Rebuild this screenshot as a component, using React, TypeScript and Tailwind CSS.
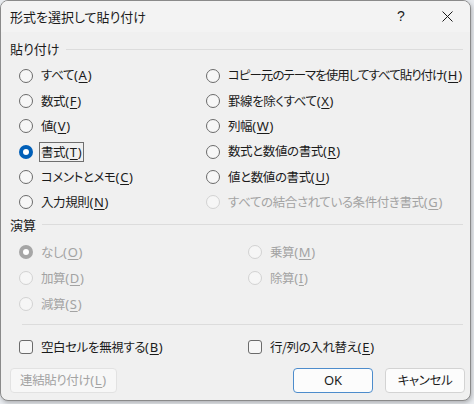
import React from "react"

const font = "[font-family:'Noto_Sans_CJK_JP','Noto_Sans',sans-serif] [font-feature-settings:'palt']"

const Label = ({ text, k, tight = false }: { text: string; k?: string; tight?: boolean }) => (
    <span className="whitespace-nowrap">
        <span className={`text-[12.5px] ${tight ? "tracking-[-1px]" : "tracking-[-0.4px]"}`}>{text}</span>
        {k && (
            <span className="[font-family:'Noto_Sans',sans-serif] text-[13px] tracking-[0.7px]">
                (<span className="underline underline-offset-[2px] decoration-1">{k}</span>)
            </span>
        )}
    </span>
)

const Radio = ({
    text,
    k,
    checked = false,
    disabled = false,
    focused = false,
    tight = false,
}: {
    text: string
    k: string
    checked?: boolean
    disabled?: boolean
    focused?: boolean
    tight?: boolean
}) => {
    let circle = "border border-[#6b6b6b] bg-[#f7f7f7]"
    if (disabled && checked) circle = "bg-[#a6a6a6]"
    else if (disabled) circle = "border border-[#d2d2d2] bg-[#f6f6f6]"
    else if (checked) circle = "bg-[#005fb8]"
    return (
        <div className={`flex items-center gap-[8px] ${disabled ? "text-[#a3a3a3]" : "text-[#1b1b1b]"}`}>
            <span className={`w-[14px] h-[14px] rounded-full flex items-center justify-center shrink-0 ${circle}`}>
                {checked && <span className="w-[6px] h-[6px] rounded-full bg-white" />}
            </span>
            <span className={focused ? "border border-[#6f6f6f] px-[1px] -ml-[2px] leading-[17px]" : ""}>
                <Label text={text} k={k} tight={tight} />
            </span>
        </div>
    )
}

const Checkbox = ({ text, k }: { text: string; k: string }) => (
    <div className="flex items-center gap-[8px] text-[#1b1b1b]">
        <span className="w-[14px] h-[14px] rounded-[3px] border border-[#6b6b6b] bg-[#f7f7f7] shrink-0" />
        <Label text={text} k={k} />
    </div>
)

const GroupLabel = ({ text }: { text: string }) => (
    <div className="flex items-center gap-[6px] pl-[9px] pr-[7px]">
        <span className="text-[#1b1b1b]">{text}</span>
        <span className="flex-1 h-px bg-[#dcdcdc]" />
    </div>
)

const pasteLeft = [
    { text: "すべて", k: "A" },
    { text: "数式", k: "F" },
    { text: "値", k: "V" },
    { text: "書式", k: "T", checked: true, focused: true },
    { text: "コメントとメモ", k: "C" },
    { text: "入力規則", k: "N" },
]

const pasteRight = [
    { text: "コピー元のテーマを使用してすべて貼り付け", k: "H", tight: true },
    { text: "罫線を除くすべて", k: "X" },
    { text: "列幅", k: "W" },
    { text: "数式と数値の書式", k: "R" },
    { text: "値と数値の書式", k: "U" },
    { text: "すべての結合されている条件付き書式", k: "G", disabled: true },
]

export default function App() {
    return (
        <div className={`w-[474px] h-[404px] bg-[#e9ecf0] text-[13px] ${font}`}>
            <div className="w-[471px] h-[401px] rounded-[8px] border border-[#8a8a8a] bg-[#f0f0f0] overflow-hidden shadow-[1px_2px_4px_rgba(0,0,0,0.25)] flex flex-col">
                {/* title bar */}
                <div className="h-[31px] bg-[#f3f3f3] flex items-center pl-[9px] text-[#1b1b1b]">
                    <span className="flex-1">形式を選択して貼り付け</span>
                    <span className="w-[46px] text-center text-[14px] [font-family:'Liberation_Sans',sans-serif]">?</span>
                    <span className="w-[46px] flex justify-center">
                        <svg width="11" height="11" viewBox="0 0 11 11">
                            <path d="M0.5 0.5L10.5 10.5M10.5 0.5L0.5 10.5" stroke="#1b1b1b" strokeWidth="1" />
                        </svg>
                    </span>
                </div>

                <div className="flex flex-col pt-[5px]">
                    <div className="h-[24px] flex flex-col justify-center">
                        <GroupLabel text="貼り付け" />
                    </div>
                    <div className="grid grid-cols-[205px_1fr] mt-[2px]">
                        <div className="flex flex-col pl-[18px]">
                            {pasteLeft.map((r) => (
                                <div key={r.k} className="h-[25.3px] flex items-center">
                                    <Radio {...r} />
                                </div>
                            ))}
                        </div>
                        <div className="flex flex-col">
                            {pasteRight.map((r) => (
                                <div key={r.k} className="h-[25.3px] flex items-center">
                                    <Radio {...r} />
                                </div>
                            ))}
                        </div>
                    </div>

                    <div className="h-[20px] flex flex-col justify-center">
                        <GroupLabel text="演算" />
                    </div>
                    <div className="grid grid-cols-[247px_1fr] mt-[4px]">
                        <div className="flex flex-col pl-[18px]">
                            <div className="h-[26px] flex items-center">
                                <Radio text="なし" k="O" checked disabled />
                            </div>
                            <div className="h-[26px] flex items-center">
                                <Radio text="加算" k="D" disabled />
                            </div>
                            <div className="h-[26px] flex items-center">
                                <Radio text="減算" k="S" disabled />
                            </div>
                        </div>
                        <div className="flex flex-col">
                            <div className="h-[26px] flex items-center">
                                <Radio text="乗算" k="M" disabled />
                            </div>
                            <div className="h-[26px] flex items-center">
                                <Radio text="除算" k="I" disabled />
                            </div>
                        </div>
                    </div>

                    <div className="h-px bg-[#dcdcdc] ml-[21px] mr-[7px] mt-[7px]" />

                    <div className="grid grid-cols-[247px_1fr] mt-[10px] h-[24px] items-center">
                        <div className="pl-[18px]">
                            <Checkbox text="空白セルを無視する" k="B" />
                        </div>
                        <Checkbox text="行/列の入れ替え" k="E" />
                    </div>

                    <div className="flex items-center mt-[9px] pl-[9px] pr-[5px]">
                        <button className="h-[25px] w-[107px] rounded-[4px] border border-[#e2e2e2] bg-[#f7f7f7] text-[#a3a3a3]">
                            <Label text="連結貼り付け" k="L" />
                        </button>
                        <span className="flex-1" />
                        <button className="h-[25px] w-[80px] rounded-[4px] border border-[#4d8ccc] bg-[#fcfcfc] text-[#1b1b1b] [font-family:'Noto_Sans',sans-serif]">
                            OK
                        </button>
                        <button className="h-[25px] w-[80px] ml-[12px] rounded-[4px] border border-[#d3d3d3] bg-[#fcfcfc] text-[#1b1b1b]">
                            <Label text="キャンセル" />
                        </button>
                    </div>
                </div>
            </div>
        </div>
    )
}
